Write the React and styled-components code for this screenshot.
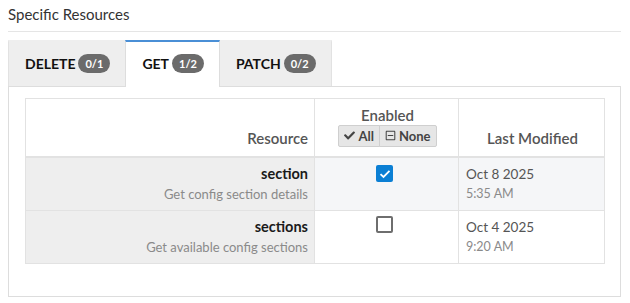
import React from "react";
import styled, { createGlobalStyle } from "styled-components";
import { FaCheck, FaRegMinusSquare } from "react-icons/fa";

const Global = createGlobalStyle`
  html, body { margin: 0; padding: 0; background: #fff; }
  body { font-family: "Lato", "Liberation Sans", sans-serif; color: #333; }
  * { box-sizing: border-box; }
`;

const Page = styled.div`
  padding: 0 9px 0 8px;
`;

const Title = styled.div`
  font-size: 15px;
  line-height: 20px;
  padding: 4px 0 7px;
  color: #333;
  border-bottom: 1px solid #e5e5e5;
`;

const Tabs = styled.div`
  display: flex;
  margin-top: 8px;
`;

const Tab = styled.div`
  display: flex;
  align-items: center;
  gap: 3px;
  padding: 0 15px 2px 16px;
  font-size: 14px;
  font-weight: 700;
  color: #111;
  background: ${p => (p.$active ? "#fff" : "#eeeeee")};
  border-top: 2px solid ${p => (p.$active ? "#4a8fd6" : "#eeeeee")};
  border-left: 1px solid ${p => (p.$active ? "#ddd" : "#e2e2e2")};
  border-right: 1px solid ${p => (p.$active ? "#ddd" : "#e2e2e2")};
  margin-bottom: ${p => (p.$active ? "-1px" : "0")};
  position: relative;
  z-index: ${p => (p.$active ? 1 : 0)};
  height: ${p => (p.$active ? "47px" : "46px")};
  & + & { margin-left: -1px; }
`;

const Badge = styled.span`
  display: inline-flex;
  align-items: center;
  justify-content: center;
  height: 19px;
  padding: 0 7px;
  border-radius: 10px;
  background: #6b6b6b;
  color: #fff;
  font-size: 11px;
  font-weight: 700;
`;

const Panel = styled.div`
  border: 1px solid #ddd;
  padding: 11px 16px 33px;
  height: 211px;
`;

const Table = styled.table`
  width: 579px;
  border-collapse: collapse;
  table-layout: fixed;
  font-size: 14px;
`;

const Th = styled.th`
  border: 1px solid #e2e2e2;
  border-bottom: 2px solid #e2e2e2;
  height: 58px;
  padding: 0 6px 9px 8px;
  vertical-align: bottom;
  text-align: ${p => p.$align || "center"};
  font-weight: 600;
  color: #555;
  font-size: 15px;
  line-height: 18px;
`;

const Td = styled.td`
  border: 1px solid #e2e2e2;
  height: 53px;
  padding: ${p => p.$pad || "6px 6px 6px 7px"};
  vertical-align: top;
  text-align: ${p => p.$align || "left"};
  background: ${p => p.$bg || "#fff"};
  line-height: 20px;
`;

const Name = styled.div`
  font-weight: 700;
  color: #1a1a1a;
  font-size: 14.5px;
`;

const Desc = styled.div`
  color: #8a8a8a;
  font-size: 13px;
`;

const DateText = styled.div`
  color: #555;
  font-size: 13.5px;
`;

const TimeText = styled.div`
  color: #8a8a8a;
  font-size: 12.5px;
`;

const BtnGroup = styled.div`
  display: inline-flex;
  margin-top: 1px;
`;

const Btn = styled.button`
  display: inline-flex;
  align-items: center;
  gap: 3px;
  height: 22px;
  padding: 0 5px;
  background: #e6e6e6;
  border: 1px solid #cfcfcf;
  font-family: inherit;
  font-size: 13px;
  font-weight: 700;
  color: #444;
  border-radius: ${p => (p.$first ? "2px 0 0 2px" : "0 2px 2px 0")};
  & + & { margin-left: -1px; }
  svg { font-size: 11px; }
`;

const Check = styled.span`
  display: inline-flex;
  align-items: center;
  justify-content: center;
  width: 17px;
  height: 17px;
  margin-top: -1px;
  border-radius: 2px;
  background: ${p => (p.$on ? "#0b7fd4" : "#fff")};
  border: ${p => (p.$on ? "none" : "2px solid #6e6e6e")};
`;

const rows = [
  { name: "section", desc: "Get config section details", on: true, date: "Oct 8 2025", time: "5:35 AM", bg: "#f5f6f8" },
  { name: "sections", desc: "Get available config sections", on: false, date: "Oct 4 2025", time: "9:20 AM", bg: "#fff" },
];

export default function App() {
  return (
    <Page>
      <Global />
      <Title>Specific Resources</Title>
      <Tabs>
        <Tab>DELETE <Badge>0/1</Badge></Tab>
        <Tab $active>GET <Badge>1/2</Badge></Tab>
        <Tab>PATCH <Badge>0/2</Badge></Tab>
      </Tabs>
      <Panel>
        <Table>
          <colgroup>
            <col style={{ width: 289 }} />
            <col style={{ width: 144 }} />
            <col style={{ width: 146 }} />
          </colgroup>
          <thead>
            <tr>
              <Th $align="right">Resource</Th>
              <Th>
                <div>Enabled</div>
                <BtnGroup>
                  <Btn $first><FaCheck />All</Btn>
                  <Btn><FaRegMinusSquare />None</Btn>
                </BtnGroup>
              </Th>
              <Th>Last Modified</Th>
            </tr>
          </thead>
          <tbody>
            {rows.map(r => (
              <tr key={r.name}>
                <Td $align="right" $bg="#eeeeee">
                  <Name>{r.name}</Name>
                  <Desc>{r.desc}</Desc>
                </Td>
                <Td $align="center" $bg={r.bg} $pad="6px 10px 6px 6px">
                  <Check $on={r.on}>
                    {r.on && (
                      <svg width="12" height="10" viewBox="0 0 12 10">
                        <path d="M1.5 5.2 L4.5 8 L10.5 1.8" fill="none" stroke="#fff" strokeWidth="1.8" />
                      </svg>
                    )}
                  </Check>
                </Td>
                <Td $bg={r.bg}>
                  <DateText>{r.date}</DateText>
                  <TimeText>{r.time}</TimeText>
                </Td>
              </tr>
            ))}
          </tbody>
        </Table>
      </Panel>
    </Page>
  );
}
